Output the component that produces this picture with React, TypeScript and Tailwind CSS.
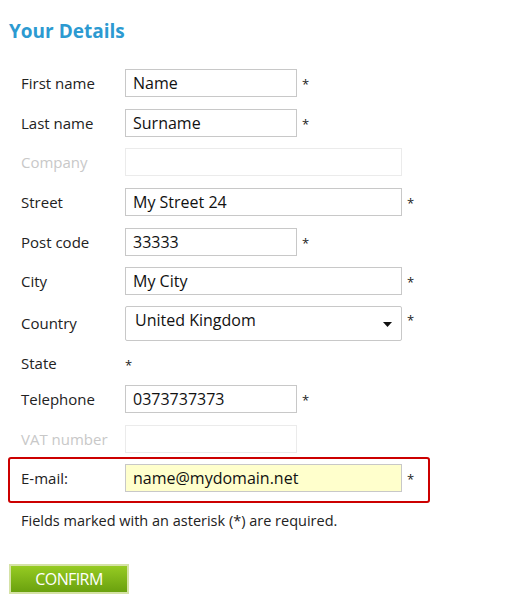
import React from 'react';

type Row = {
    label: string;
    value?: string;
    wide?: boolean;
    disabled?: boolean;
    required?: boolean;
    mt: string;
};

const rows: Row[] = [
    { label: 'First name', value: 'Name', required: true, mt: 'mt-0' },
    { label: 'Last name', value: 'Surname', required: true, mt: 'mt-[12px]' },
    { label: 'Company', wide: true, disabled: true, mt: 'mt-[11px]' },
    { label: 'Street', value: 'My Street 24', wide: true, required: true, mt: 'mt-[12px]' },
    { label: 'Post code', value: '33333', required: true, mt: 'mt-[12px]' },
    { label: 'City', value: 'My City', wide: true, required: true, mt: 'mt-[11px]' },
];

function Star() {
    return <span className="ml-[5px] mt-[4px] text-[13px] text-[#222]">*</span>;
}

function Field({ row }: { row: Row }) {
    return (
        <div className={`ml-[8px] flex h-[28px] items-center pl-[13px] ${row.mt}`}>
            <span className={`w-[104px] shrink-0 text-[15px] ${row.disabled ? 'text-[#c8c8c8]' : 'text-[#222]'}`}>
                {row.label}
            </span>
            <div
                className={`flex h-[28px] items-center border bg-white pl-[7px] text-[16px] text-[#111] ${
                    row.wide ? 'w-[277px]' : 'w-[172px]'
                } ${row.disabled ? 'border-[#ebebeb]' : 'border-[#c8c8c8]'}`}
            >
                {row.value}
            </div>
            {row.required && <Star />}
        </div>
    );
}

export default function App() {
    return (
        <div className="h-[614px] w-[505px] bg-white font-['Open_Sans','Liberation_Sans',sans-serif]">
            <h1 className="pl-[9px] pt-[18px] text-[19px] font-bold leading-[26px] text-[#2c9ad1]">Your Details</h1>

            <div className="mt-[25px] flex flex-col">
                {rows.map((r) => (
                    <Field key={r.label} row={r} />
                ))}

                <div className="ml-[8px] mt-[11px] flex h-[35px] items-start pl-[13px]">
                    <span className="mt-[6px] w-[104px] shrink-0 text-[15px] text-[#222]">Country</span>
                    <div className="relative h-[35px] w-[277px] rounded-[2px] border border-[#c8c8c8] pl-[9px] pt-[1px] text-[16px] text-[#111]">
                        United Kingdom
                        <svg className="absolute right-[9px] top-[15px]" width="9" height="5" viewBox="0 0 9 5">
                            <path d="M0 0h9L4.5 5z" fill="#111" />
                        </svg>
                    </div>
                    <span className="ml-[5px] mt-[5px] text-[13px] text-[#222]">*</span>
                </div>

                <div className="ml-[8px] mt-[12px] flex h-[21px] items-center pl-[13px]">
                    <span className="w-[104px] shrink-0 text-[15px] text-[#222]">State</span>
                    <span className="mt-[5px] text-[13px] text-[#222]">*</span>
                </div>

                <Field row={{ label: 'Telephone', value: '0373737373', required: true, mt: 'mt-[11px]' }} />
                <Field row={{ label: 'VAT number', disabled: true, mt: 'mt-[12px]' }} />

                <div className="ml-[8px] mt-[4px] flex w-[422px] items-center rounded-[3px] border-2 border-[#cc0000] pb-[9px] pl-[11px] pt-[5px]">
                    <span className="w-[104px] shrink-0 text-[15px] text-[#222]">E-mail:</span>
                    <div className="flex h-[28px] w-[277px] items-center border border-[#c8c8c8] bg-[#ffffcc] pl-[7px] text-[16px] text-[#111]">
                        name@mydomain.net
                    </div>
                    <Star />
                </div>

                <p className="ml-[21px] mt-[8px] text-[14.5px] leading-[20px] text-[#222]">
                    Fields marked with an asterisk (*) are required.
                </p>

                <button className="ml-[9px] mt-[33px] h-[30px] w-[120px] border-2 border-[#d5e2a6] bg-gradient-to-b from-[#96cb22] to-[#6aa10e] text-[16px] tracking-[-0.6px] text-white">
                    CONFIRM
                </button>
            </div>
        </div>
    );
}
